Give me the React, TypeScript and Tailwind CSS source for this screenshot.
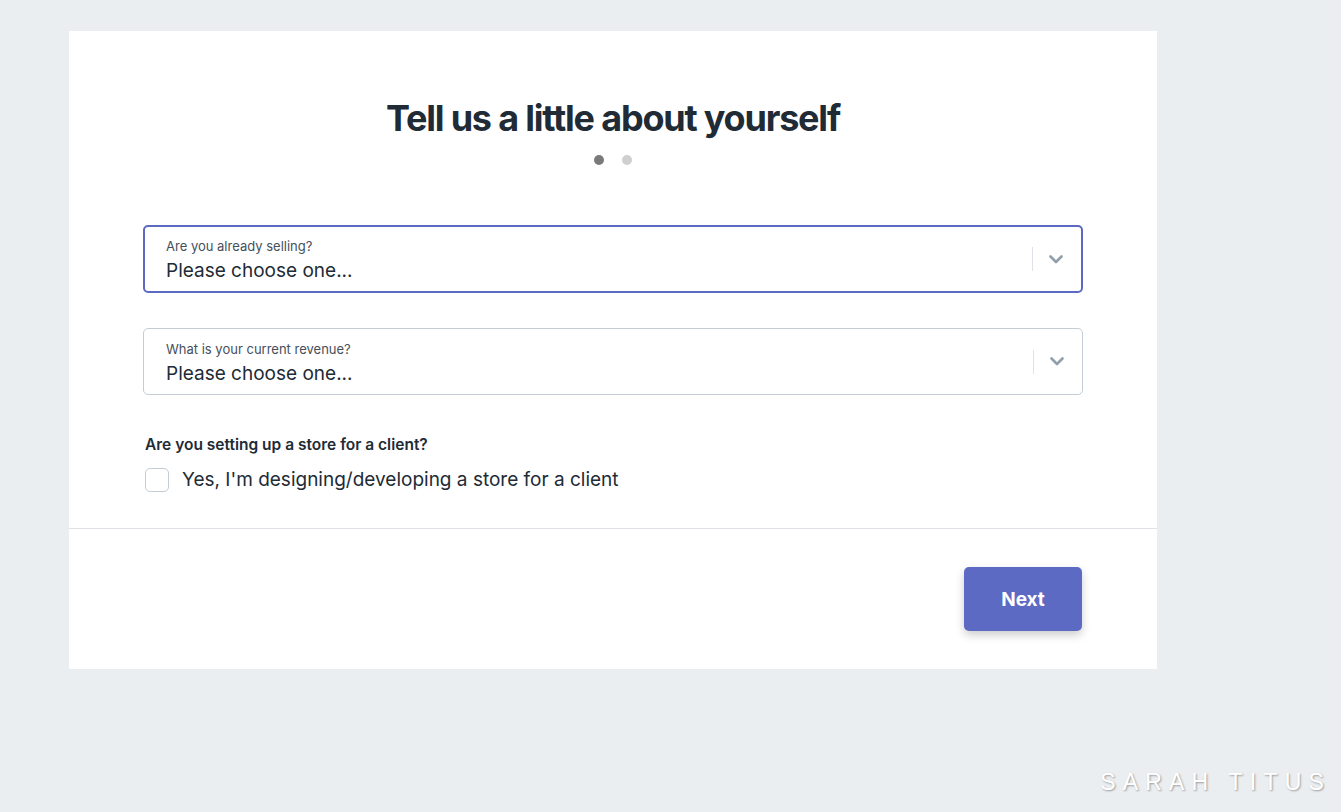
function Chevron() {
  return (
    <svg width="14" height="9" viewBox="0 0 14 9" fill="none">
      <path d="M1.5 1.5 L7 7 L12.5 1.5" stroke="#919eab" strokeWidth="2.6" strokeLinecap="round" strokeLinejoin="round" />
    </svg>
  )
}

function SelectField({ label, active }: { label: string; active?: boolean }) {
  return (
    <div
      className={
        active
          ? 'flex h-[68px] items-center rounded-[5px] border-2 border-[#5c6ac4] bg-white pl-[21px]'
          : 'flex h-[67px] items-center rounded-[5px] border border-[#c4cdd5] bg-white pl-[22px]'
      }
    >
      <div className="flex flex-1 flex-col pt-[2px]">
        <span className="text-[13px] leading-[16px] text-[#454f5b]">{label}</span>
        <span className="mt-[6px] text-[19px] leading-[22px] text-[#212b36]">Please choose one...</span>
      </div>
      <div className="flex h-full items-center pr-[2px]">
        <div className="h-[24px] w-px bg-[#dfe3e8]" />
        <div className="flex w-[46px] justify-center">
          <Chevron />
        </div>
      </div>
    </div>
  )
}

export default function App() {
  return (
    <div className="relative min-h-[812px] w-full bg-[#ebeef0] font-['Inter','Noto_Sans',sans-serif]">
      <div className="pl-[69px] pt-[31px]">
        <div className="w-[1088px] bg-white">
          <div className="px-[74px] pb-[36px] pt-[65px]">
            <h1 className="text-center text-[36px] font-bold leading-[44px] tracking-[-1.2px] text-[#212b36]">
              Tell us a little about yourself
            </h1>
            <div className="mt-[15px] flex justify-center gap-[18px]">
              <span className="h-[10px] w-[10px] rounded-full bg-[#7a7a7a]" />
              <span className="h-[10px] w-[10px] rounded-full bg-[#cfcfcf]" />
            </div>
            <div className="mt-[60px] flex flex-col gap-[35px]">
              <SelectField label="Are you already selling?" active />
              <SelectField label="What is your current revenue?" />
            </div>
            <div className="mt-[40px] pl-[2px]">
              <p className="text-[15.5px] font-semibold leading-[20px] text-[#212b36]">Are you setting up a store for a client?</p>
              <label className="mt-[13px] flex items-center gap-[13px]">
                <span className="h-[24px] w-[24px] rounded-[5px] border border-[#c4cdd5] bg-white" />
                <span className="text-[19px] leading-[24px] text-[#212b36]">Yes, I'm designing/developing a store for a client</span>
              </label>
            </div>
          </div>
          <div className="flex justify-end border-t border-[#dfe3e8] px-[75px] pb-[38px] pt-[38px]">
            <button className="h-[64px] w-[118px] rounded-[5px] bg-[#5c6ac4] pt-[3px] text-[19px] font-bold text-white shadow-[0_4px_10px_rgba(0,0,0,0.2)]">
              Next
            </button>
          </div>
        </div>
      </div>
      <div className="absolute bottom-[13px] right-[10px] text-[23px] font-light tracking-[7.2px] text-white [text-shadow:1px_1px_2px_rgba(0,0,0,0.35)] font-['Liberation_Sans',sans-serif]">
        SARAH TITUS
      </div>
    </div>
  )
}
